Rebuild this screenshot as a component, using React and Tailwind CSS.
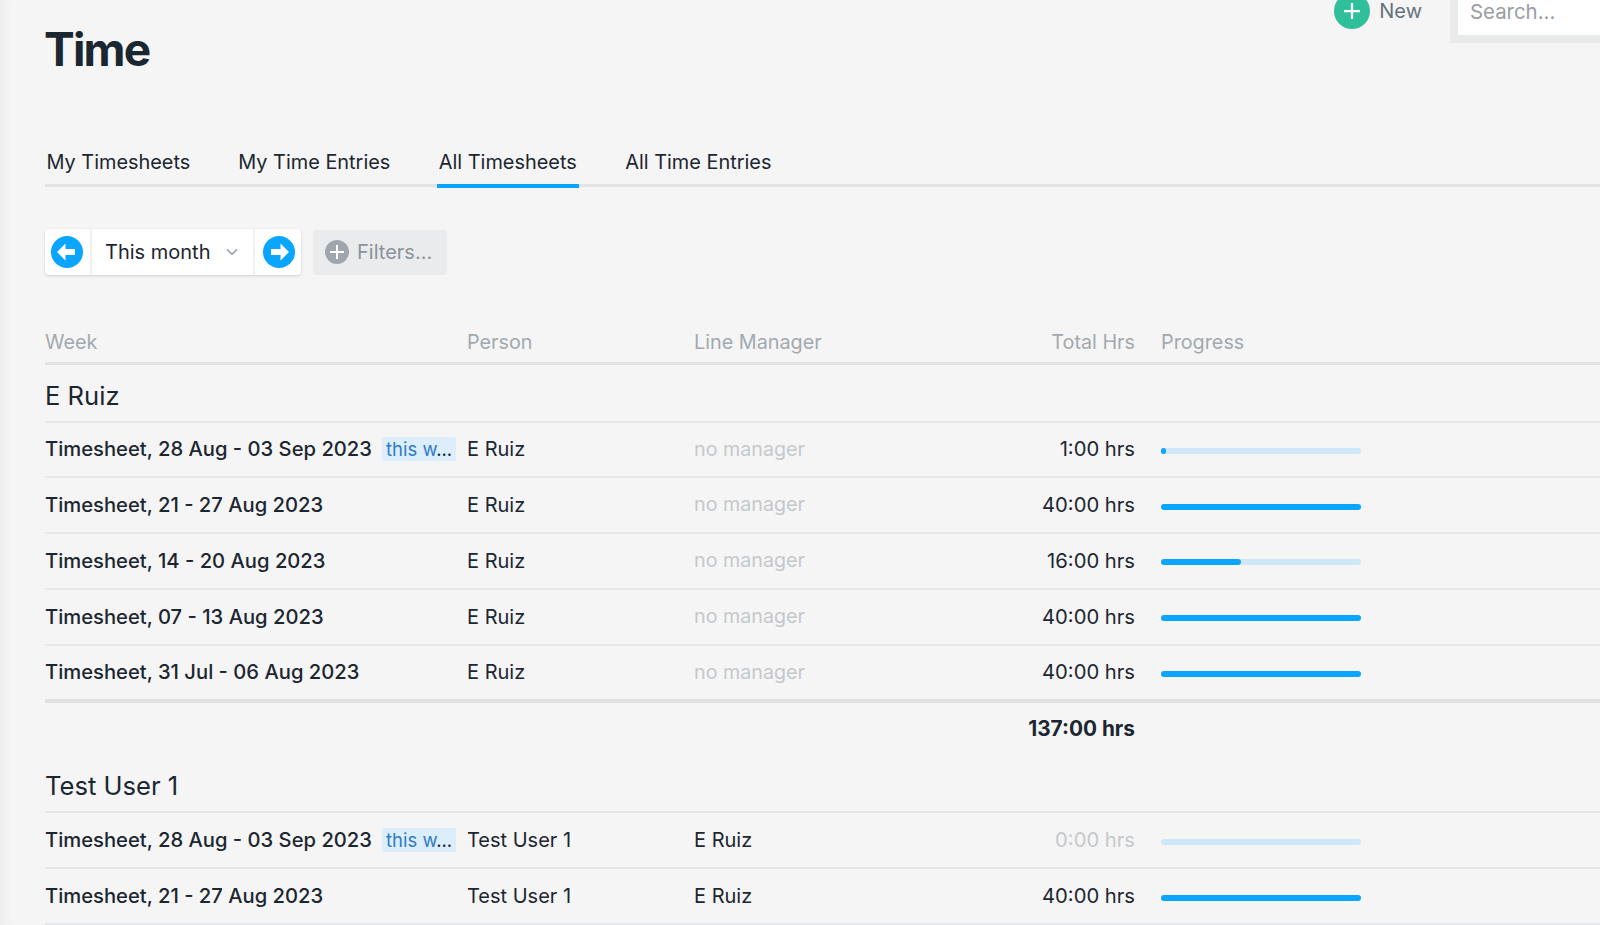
import { ChevronDown } from 'lucide-react'

const gridCols = 'grid grid-cols-[422px_227px_200px_241px_1fr] items-center'

const groups = [
  {
    name: 'E Ruiz',
    total: '137:00 hrs',
    rows: [
      { week: 'Timesheet, 28 Aug - 03 Sep 2023', current: true, person: 'E Ruiz', hours: '1:00 hrs', pct: 2.5 },
      { week: 'Timesheet, 21 - 27 Aug 2023', person: 'E Ruiz', hours: '40:00 hrs', pct: 100 },
      { week: 'Timesheet, 14 - 20 Aug 2023', person: 'E Ruiz', hours: '16:00 hrs', pct: 40 },
      { week: 'Timesheet, 07 - 13 Aug 2023', person: 'E Ruiz', hours: '40:00 hrs', pct: 100 },
      { week: 'Timesheet, 31 Jul - 06 Aug 2023', person: 'E Ruiz', hours: '40:00 hrs', pct: 100 },
    ],
  },
  {
    name: 'Test User 1',
    rows: [
      { week: 'Timesheet, 28 Aug - 03 Sep 2023', current: true, person: 'Test User 1', manager: 'E Ruiz', hours: '0:00 hrs', pct: 0 },
      { week: 'Timesheet, 21 - 27 Aug 2023', person: 'Test User 1', manager: 'E Ruiz', hours: '40:00 hrs', pct: 100 },
    ],
  },
]

function ArrowCircle({ direction }) {
  return (
    <svg width="32" height="32" viewBox="0 0 32 32">
      <circle cx="16" cy="16" r="16" fill="#0aa5ff" />
      <path
        d={direction === 'left' ? 'M6 16l8.5-8.5V13H24v6h-9.5v5.5z' : 'M26 16l-8.5-8.5V13H8v6h9.5v5.5z'}
        fill="#fff"
      />
    </svg>
  )
}

function PlusCircle({ size, fill, arm, stroke }) {
  return (
    <svg width={size} height={size} viewBox="0 0 24 24">
      <circle cx="12" cy="12" r="12" fill={fill} />
      <path d={`M12 ${12 - arm}V${12 + arm}M${12 - arm} 12H${12 + arm}`} stroke="#fff" strokeWidth={stroke} />
    </svg>
  )
}

function Row({ row, last }) {
  const empty = row.pct === 0
  return (
    <div className={`${gridCols} text-[20px] text-[#1c2630] ${last ? 'h-[53.2px]' : 'h-[55.8px] border-b-2 border-[#e6e7e8]'}`}>
      <div className="flex items-center">
        <span className="text-[20.2px] font-medium">{row.week}</span>
        {row.current ? (
          <span className="ml-[10px] rounded-[2px] bg-[#dceefb] px-[4px] text-[18.5px] leading-[24px] text-[#2f7bc8]">
            this w<span className="text-[#1c2630]">...</span>
          </span>
        ) : null}
      </div>
      <div>{row.person}</div>
      <div className={row.manager ? '' : 'text-[19.7px] text-[#c5c9cc]'}>{row.manager || 'no manager'}</div>
      <div className={`text-right text-[20.2px] ${empty ? 'text-[#c5c9cc]' : ''}`}>{row.hours}</div>
      <div className="pl-[26px]">
        <div className="mt-[3px] h-[6px] w-[199.5px] rounded-full bg-[#cfe8f8]">
          <div className="h-full rounded-full bg-[#0aa5ff]" style={{ width: `${row.pct}%` }} />
        </div>
      </div>
    </div>
  )
}

function Group({ group }) {
  return (
    <section>
      <h2 className="flex h-[57.5px] items-end border-b-2 border-[#e6e7e8] pb-[9px] text-[25.6px] leading-[32px] text-[#1c2630]">
        {group.name}
      </h2>
      {group.rows.map((row, index) => (
        <Row key={row.week} row={row} last={group.total && index === group.rows.length - 1} />
      ))}
      {group.total ? (
        <>
          <div className="h-[4px] bg-[#dfe1e3]" />
          <div className={`${gridCols} h-[53px] pb-[2px] text-[20.8px] font-bold text-[#1c2630]`}>
            <div />
            <div />
            <div />
            <div className="text-right">{group.total}</div>
          </div>
        </>
      ) : null}
    </section>
  )
}

export default function App() {
  return (
    <div className="h-[925px] overflow-hidden bg-[#f5f5f5] pl-[45px] font-['Inter',sans-serif] shadow-[inset_14px_0_12px_-10px_rgba(0,0,0,0.04)]">
      <header className="flex h-[141px] items-start justify-between">
        <h1 className="mt-[18px] -ml-[1px] text-[46px] leading-[62px] font-bold tracking-[-1.8px] text-[#1b2730]">Time</h1>
        <div className="-mt-[7px] flex items-start">
          <button className="flex items-center gap-[9px] text-[20px] text-[#66727f]">
            <PlusCircle size={36} fill="#2fbf9b" arm={5.3} stroke={1.5} />
            New
          </button>
          <div className="-mt-[1px] ml-[28px] w-[150px] bg-[#e9ebeb] pb-[8px] pl-[8px]">
            <div className="flex h-[43px] items-center bg-white pb-[3px] pl-[12px] text-[20.4px] text-[#9a9ea3]">Search...</div>
          </div>
        </div>
      </header>

      <nav className="flex h-[46px] gap-[44.5px] border-b-[3px] border-[#e2e3e4] text-[19.9px] text-[#1c2630]">
        <a className="px-[1.5px] pt-[7px]">My Timesheets</a>
        <a className="px-[2px] pt-[7px]">My Time Entries</a>
        <a className="h-[47px] border-b-4 border-[#0aa5ff] px-[2px] pt-[7px]">All Timesheets</a>
        <a className="px-[2px] pt-[7px]">All Time Entries</a>
      </nav>

      <div className="mt-[42px] flex items-center gap-[12px]">
        <div className="flex h-[46px] items-stretch rounded-[4px] bg-white shadow-[0_1px_3px_rgba(0,0,0,0.15)]">
          <button className="flex w-[47px] items-center justify-center border-r-2 border-[#f0f0f0] pr-[1px]">
            <ArrowCircle direction="left" />
          </button>
          <button className="flex w-[161px] items-center justify-between pr-[12px] pl-[13px] text-[20px] text-[#1c2630]">
            This month
            <ChevronDown size={18} strokeWidth={2.25} className="text-[#9aa0a6]" />
          </button>
          <button className="flex w-[48px] items-center justify-center border-l-2 border-[#f0f0f0] pl-[2px]">
            <ArrowCircle direction="right" />
          </button>
        </div>
        <button className="flex h-[45px] w-[134px] items-center gap-[8px] rounded-[4px] bg-[#e9ebed] pl-[12px] text-[20px] text-[#8b939b]">
          <PlusCircle size={24} fill="#a0a6ae" arm={7} stroke={2} />
          Filters...
        </button>
      </div>

      <div className={`${gridCols} mt-[46px] h-[44px] border-b-[3px] border-[#e2e3e4] pt-[2px] text-[19.8px] text-[#a3a9ae]`}>
        <div>Week</div>
        <div>Person</div>
        <div>Line Manager</div>
        <div className="text-right">Total Hrs</div>
        <div className="pl-[26px]">Progress</div>
      </div>

      {groups.map((group) => (
        <Group key={group.name} group={group} />
      ))}
    </div>
  )
}
